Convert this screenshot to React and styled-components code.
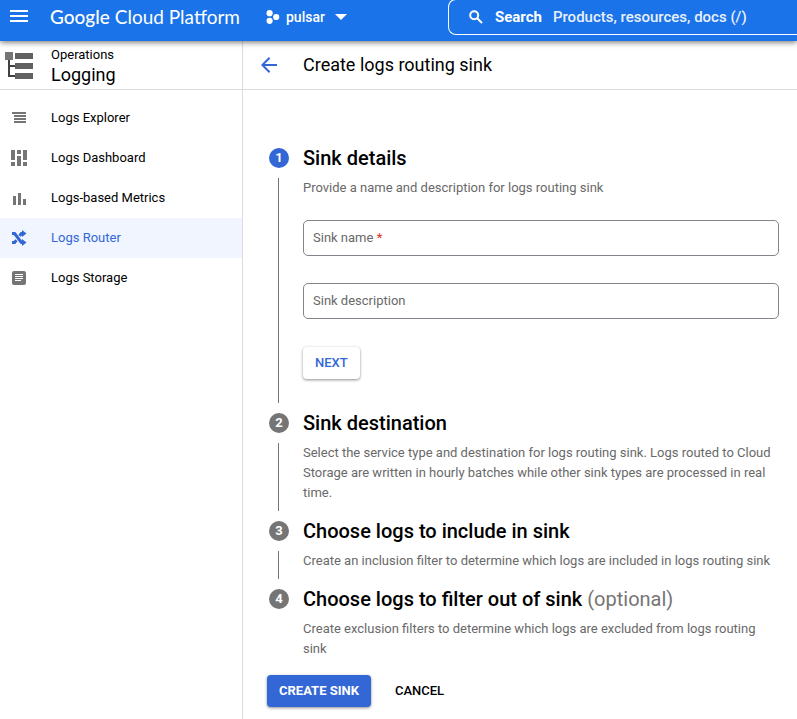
import React from "react";
import styled, { createGlobalStyle } from "styled-components";

const GlobalStyle = createGlobalStyle`
  *, *::before, *::after { box-sizing: border-box; }
  body {
    margin: 0;
    background: #fff;
    color: #000;
    font-family: Roboto, "Liberation Sans", sans-serif;
    font-size: 13px;
    line-height: 20px;
  }
  h1, h2, p, ul, ol { margin: 0; padding: 0; font-weight: 400; }
  ul, ol { list-style: none; }
  button, input { font: inherit; color: inherit; }
`;

const Page = styled.div`
  display: flex;
  flex-direction: column;
  min-height: 100vh;
`;

const TopBar = styled.header`
  position: relative;
  display: flex;
  align-items: flex-start;
  height: 41px;
  padding-left: 7px;
  background: #1a73e8;
  color: #fff;
  box-shadow: 0 1px 6px rgba(0, 0, 0, 0.6);
`;

const IconButton = styled.button`
  display: flex;
  align-items: center;
  justify-content: center;
  width: 24px;
  height: ${(p) => p.$height || 24}px;
  padding: 0;
  border: 0;
  background: none;
  color: ${(p) => p.$color || "inherit"};
  cursor: pointer;
`;

const Brand = styled.a`
  width: 215px;
  padding-left: 19px;
  color: inherit;
  font-family: Lato, sans-serif;
  font-size: 19px;
  line-height: 34px;
  text-decoration: none;
  white-space: nowrap;
`;

const BrandStrong = styled.span`
  font-weight: 500;
`;

const ProjectButton = styled.button`
  display: flex;
  align-items: center;
  height: 34px;
  width: 202px;
  flex-shrink: 0;
  padding: 0 0 0 20px;
  border: 0;
  background: none;
  font-size: 14px;
  font-weight: 500;
  cursor: pointer;
`;

const ProjectName = styled.span`
  margin: 0 10px 0 6px;
`;

const SearchBox = styled.label`
  display: flex;
  flex: 1;
  align-items: center;
  min-width: 0;
  height: 36px;
  margin-top: -1px;
  padding: 0 0 1px 19px;
  border: 1px solid #fff;
  border-right: 0;
  border-radius: 8px 0 0 8px;
  font-size: 15px;
  font-weight: 500;
`;

const SearchLabel = styled.span`
  margin: 0 11px 0 11px;
  font-weight: 700;
`;

const SearchInput = styled.input`
  flex: 1;
  min-width: 0;
  padding: 0;
  border: 0;
  outline: 0;
  background: none;
  &::placeholder { color: #e8f0fe; opacity: 1; }
`;

const Body = styled.div`
  display: flex;
  flex: 1;
`;

const Sidebar = styled.aside`
  flex: 0 0 243px;
  border-right: 1px solid #dadce0;
`;

const SectionHeader = styled.div`
  display: flex;
  align-items: center;
  height: 49px;
  border-bottom: 1px solid #dadce0;
`;

const ProductIcon = styled.div`
  display: flex;
  width: 51px;
  padding: 2px 0 0 5px;
`;

const ProductHeading = styled.div`
  padding-top: 4px;
`;

const ProductArea = styled.p`
  line-height: 16px;
`;

const ProductName = styled.h2`
  font-size: 18px;
  line-height: 24px;
`;

const NavList = styled.ul`
  padding-top: 8px;
`;

const NavLink = styled.a`
  display: flex;
  align-items: center;
  gap: 23px;
  height: 40px;
  padding-left: 10px;
  background: ${(p) => (p.$active ? "#f0f5ff" : "transparent")};
  color: ${(p) => (p.$active ? "#3367d6" : "#000")};
  text-decoration: none;
  svg { color: ${(p) => (p.$active ? "#3367d6" : "#757575")}; }
`;

const Main = styled.main`
  flex: 1;
  min-width: 0;
`;

const PageHeader = styled(SectionHeader)`
  gap: 22px;
  padding-left: 14px;
`;

const PageTitle = styled.h1`
  font-size: 18px;
  line-height: 24px;
`;

const Form = styled.form`
  padding: 58px 18px 12px 26px;
`;

const Step = styled.li`
  display: grid;
  grid-template-columns: 20px minmax(0, 1fr);
  column-gap: 14px;
`;

const Rail = styled.div`
  display: flex;
  flex-direction: column;
  gap: 10px;
  &::after {
    content: "";
    flex: 1;
    width: 1px;
    margin: 0 0 10px 9px;
    background: ${(p) => (p.$last ? "transparent" : "#757575")};
  }
`;

const StepNumber = styled.span`
  width: 20px;
  height: 20px;
  border-radius: 50%;
  background: ${(p) => (p.$active ? "#3367d6" : "#757575")};
  color: #fff;
  font-weight: 700;
  text-align: center;
`;

const StepContent = styled.div`
  padding-bottom: ${(p) => (p.$last ? 16 : 18)}px;
`;

const StepTitle = styled.h2`
  padding-bottom: 10px;
  font-size: 20px;
  font-weight: 500;
`;

const Optional = styled.span`
  color: #757575;
  font-weight: 400;
`;

const StepText = styled.p`
  color: #696969;
`;

const Fields = styled.div`
  display: flex;
  flex-direction: column;
  gap: 27px;
  padding: 22px 0 28px;
`;

const StepActions = styled.div`
  display: flex;
  padding-bottom: 16px;
`;

const Field = styled.div`
  display: grid;
  align-items: center;
  & > * { grid-area: 1 / 1; }
`;

const FieldLabel = styled.label`
  justify-self: start;
  margin-left: 10px;
  color: #696969;
  pointer-events: none;
`;

const Required = styled.span`
  color: #d93025;
`;

const TextInput = styled.input`
  width: 100%;
  height: 36px;
  padding: 0 9px;
  border: 1px solid #80868b;
  border-radius: 5px;
  background: #fff;
  &:not(:placeholder-shown) + label { visibility: hidden; }
`;

const Button = styled.button`
  height: 32px;
  padding: 0 12px;
  border: 0;
  border-radius: 4px;
  background: ${(p) => (p.$primary ? "#3367d6" : "#fff")};
  color: ${(p) => (p.$primary ? "#fff" : p.$plain ? "#000" : "#3367d6")};
  box-shadow: ${(p) => (p.$plain ? "none" : "0 1px 3px rgba(0, 0, 0, 0.45)")};
  font-weight: ${(p) => (p.$primary ? 700 : 500)};
  text-transform: uppercase;
  white-space: nowrap;
  cursor: pointer;
`;

const Actions = styled.div`
  display: flex;
  gap: 12px;
  margin-left: -2px;
`;

const MenuIcon = () => (
  <svg width="18" height="12" viewBox="0 0 18 12" fill="currentColor" aria-hidden="true">
    <path d="M0 0h18v2H0zM0 5h18v2H0zM0 10h18v2H0z" />
  </svg>
);

const ProjectIcon = () => (
  <svg width="14" height="14" viewBox="0 0 14 14" fill="currentColor" aria-hidden="true">
    <circle cx="3.6" cy="3.2" r="3.1" />
    <circle cx="3.6" cy="10.8" r="3.1" />
    <circle cx="10.2" cy="7" r="3.1" />
  </svg>
);

const CaretIcon = () => (
  <svg width="12" height="6" viewBox="0 0 12 6" fill="currentColor" aria-hidden="true">
    <path d="M0 0h12L6 6z" />
  </svg>
);

const SearchIcon = () => (
  <svg width="16" height="16" viewBox="0 0 16 16" fill="none" stroke="currentColor" strokeWidth="2" aria-hidden="true">
    <circle cx="6.2" cy="6.2" r="4" />
    <path d="M9.2 9.2l4.8 4.8" />
  </svg>
);

const LoggingIcon = () => (
  <svg width="28" height="28" viewBox="0 0 28 28" fill="#616161" aria-hidden="true">
    <path fill="#757575" d="M0 0h8v8H0z" />
    <path d="M10 1h18v6H10zM10 11h18v6H10zM10 21h18v6H10z" />
    <path fill="#424242" d="M3 8h2v5h5v2H5v8h5v2H3z" />
  </svg>
);

const BackIcon = () => (
  <svg width="16" height="16" viewBox="0 0 16 16" fill="none" stroke="currentColor" strokeWidth="2" aria-hidden="true">
    <path d="M16 8H1.6M8.6 .8L1.4 8l7.2 7.2" />
  </svg>
);

const navIcons = {
  explorer: <path d="M2 3h14v2H2zM4 6h12v2H4zM4 9h12v2H4zM4 12h12v2H4z" />,
  dashboard: (
    <path d="M1 1h4v10H1zM1 13h4v4H1zM7 1h4v4H7zM7 7h4v10H7zM13 1h4v10h-4zM13 13h4v4h-4z" />
  ),
  metrics: <path d="M3 7h3v9H3zM8 4h3v12H8zM13 10h3v6h-3z" />,
  router: (
    <g>
      <path
        fill="none"
        stroke="currentColor"
        strokeWidth="3"
        d="M2 4.5h2.6l6.8 9H14M2 13.5h2.6l1.8-2.4M9.6 6.9l1.8-2.4H14"
      />
      <path d="M12 1l4.5 3.5L12 8zM12 10l4.5 3.5L12 17z" />
    </g>
  ),
  storage: (
    <path
      fillRule="evenodd"
      d="M4 2h10a2 2 0 0 1 2 2v10a2 2 0 0 1-2 2H4a2 2 0 0 1-2-2V4a2 2 0 0 1 2-2zM5 5v1h8V5zM5 7v1h8V7zM5 9v1h8V9zM5 11v1h6v-1z"
    />
  ),
};

const navItems = [
  { icon: "explorer", label: "Logs Explorer" },
  { icon: "dashboard", label: "Logs Dashboard" },
  { icon: "metrics", label: "Logs-based Metrics" },
  { icon: "router", label: "Logs Router", active: true },
  { icon: "storage", label: "Logs Storage" },
];

const steps = [
  {
    title: "Sink details",
    text: "Provide a name and description for logs routing sink",
    active: true,
  },
  {
    title: "Sink destination",
    text: "Select the service type and destination for logs routing sink. Logs routed to Cloud Storage are written in hourly batches while other sink types are processed in real time.",
  },
  {
    title: "Choose logs to include in sink",
    text: "Create an inclusion filter to determine which logs are included in logs routing sink",
  },
  {
    title: "Choose logs to filter out of sink",
    text: "Create exclusion filters to determine which logs are excluded from logs routing sink",
    optional: true,
  },
];

function SinkFields() {
  return (
    <>
      <Fields>
        <Field>
          <TextInput id="sink-name" type="text" placeholder=" " required />
          <FieldLabel htmlFor="sink-name">
            Sink name <Required>*</Required>
          </FieldLabel>
        </Field>
        <Field>
          <TextInput id="sink-description" type="text" placeholder=" " />
          <FieldLabel htmlFor="sink-description">Sink description</FieldLabel>
        </Field>
      </Fields>
      <StepActions>
        <Button type="button">Next</Button>
      </StepActions>
    </>
  );
}

export default function App() {
  return (
    <Page>
      <GlobalStyle />
      <TopBar>
        <IconButton type="button" aria-label="Navigation menu" $height={32}>
          <MenuIcon />
        </IconButton>
        <Brand href="#">
          <BrandStrong>Google</BrandStrong> Cloud Platform
        </Brand>
        <ProjectButton type="button">
          <ProjectIcon />
          <ProjectName>pulsar</ProjectName>
          <CaretIcon />
        </ProjectButton>
        <SearchBox>
          <SearchIcon />
          <SearchLabel>Search</SearchLabel>
          <SearchInput type="search" placeholder="Products, resources, docs (/)" />
        </SearchBox>
      </TopBar>
      <Body>
        <Sidebar>
          <SectionHeader>
            <ProductIcon>
              <LoggingIcon />
            </ProductIcon>
            <ProductHeading>
              <ProductArea>Operations</ProductArea>
              <ProductName>Logging</ProductName>
            </ProductHeading>
          </SectionHeader>
          <nav>
            <NavList>
              {navItems.map((item) => (
                <li key={item.label}>
                  <NavLink href="#" $active={item.active} aria-current={item.active ? "page" : undefined}>
                    <svg width="18" height="18" viewBox="0 0 18 18" fill="currentColor" aria-hidden="true">
                      {navIcons[item.icon]}
                    </svg>
                    {item.label}
                  </NavLink>
                </li>
              ))}
            </NavList>
          </nav>
        </Sidebar>
        <Main>
          <PageHeader>
            <IconButton type="button" aria-label="Back" $color="#3367d6">
              <BackIcon />
            </IconButton>
            <PageTitle>Create logs routing sink</PageTitle>
          </PageHeader>
          <Form>
            <ol>
              {steps.map((step, i) => {
                const last = i === steps.length - 1;
                return (
                  <Step key={step.title}>
                    <Rail $last={last}>
                      <StepNumber $active={step.active}>{i + 1}</StepNumber>
                    </Rail>
                    <StepContent $last={last}>
                      <StepTitle>
                        {step.title}
                        {step.optional && <Optional> (optional)</Optional>}
                      </StepTitle>
                      <StepText>{step.text}</StepText>
                      {step.active && <SinkFields />}
                    </StepContent>
                  </Step>
                );
              })}
            </ol>
            <Actions>
              <Button type="button" $primary>Create sink</Button>
              <Button type="button" $plain>Cancel</Button>
            </Actions>
          </Form>
        </Main>
      </Body>
    </Page>
  );
}
